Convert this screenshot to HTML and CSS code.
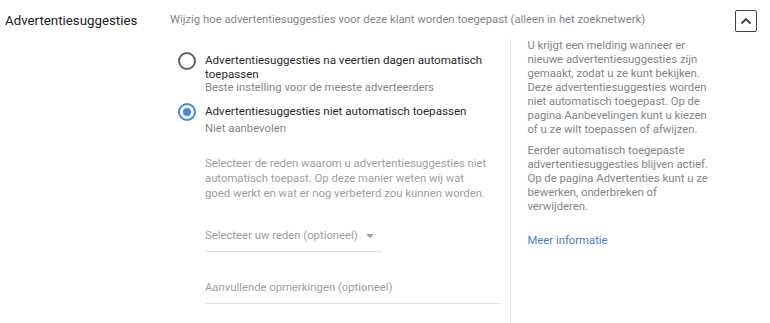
FILE: index.html
```html
<html>

<head>
    <meta charset="UTF-8">
    <title>Advertentiesuggesties</title>
    <link rel="stylesheet" href="styles.css">
</head>

<body>
    <div class="setting">
        <div class="setting_label">Advertentiesuggesties</div>
        <div class="setting_body">
            <div class="setting_desc">Wijzig hoe advertentiesuggesties voor deze klant worden toegepast (alleen in het zoeknetwerk)</div>
            <div class="setting_panel">
                <div class="options">
                    <div class="option">
                        <span class="radio"></span>
                        <div class="option_text">
                            <span class="option_title">Advertentiesuggesties na veertien dagen automatisch toepassen</span>
                            <span class="option_sub">Beste instelling voor de meeste adverteerders</span>
                        </div>
                    </div>
                    <div class="option">
                        <span class="radio checked"></span>
                        <div class="option_text">
                            <span class="option_title">Advertentiesuggesties niet automatisch toepassen</span>
                            <span class="option_sub spaced">Niet aanbevolen</span>
                        </div>
                    </div>
                    <div class="reason">
                        <p class="reason_text">Selecteer de reden waarom u advertentiesuggesties niet automatisch toepast. Op deze manier weten wij wat goed&nbsp;werkt en wat er nog verbeterd zou kunnen worden.</p>
                        <div class="field select_field">
                            <span>Selecteer uw reden (optioneel)</span>
                            <span class="arrow"></span>
                        </div>
                        <div class="field comment_field">
                            <span>Aanvullende opmerkingen (optioneel)</span>
                        </div>
                    </div>
                </div>
                <div class="help">
                    <p>U krijgt een melding wanneer er nieuwe advertentiesuggesties zijn gemaakt, zodat u ze kunt bekijken. Deze&nbsp;advertentiesuggesties worden niet automatisch toegepast. Op de pagina Aanbevelingen kunt u kiezen of u ze wilt toepassen of afwijzen.</p>
                    <p>Eerder automatisch toegepaste advertentiesuggesties blijven actief. Op de pagina Advertenties kunt u ze bewerken, onderbreken of verwijderen.</p>
                    <a class="help_link" href="#">Meer informatie</a>
                </div>
            </div>
        </div>
        <div class="setting_toggle">
            <button class="toggle_button" type="button">
                <svg width="12" height="8" viewBox="0 0 12 8"><path d="M1.5 6.5 L6 2 L10.5 6.5" fill="none" stroke="#3c4043" stroke-width="1.8"/></svg>
            </button>
        </div>
    </div>
</body>

</html>
```

FILE: styles.css
```css
body {
    margin: 0;
    font-family: Roboto, "Liberation Sans", sans-serif;
    background: #ffffff;
    color: #3c4043;
}

.setting {
    display: flex;
    padding-top: 12px;
    height: 311px;
    overflow: hidden;
}

.setting_label {
    width: 165px;
    padding-left: 5px;
    font-size: 13.3px;
    line-height: 18px;
    color: #202124;
}

.setting_body {
    width: 540px;
}

.setting_desc {
    font-size: 11.3px;
    line-height: 14px;
    color: #80868b;
    padding-top: 1px;
}

.setting_panel {
    display: flex;
    margin-top: 12px;
}

.options {
    width: 335px;
    padding-left: 8px;
    padding-top: 14px;
}

.option {
    display: flex;
    margin-bottom: 9px;
}

.radio {
    width: 14px;
    height: 14px;
    border: 2px solid #5f6368;
    border-radius: 50%;
    flex: none;
    margin-top: -1px;
    margin-right: 9px;
    position: relative;
}

.radio.checked {
    border-color: #4285f4;
}

.radio.checked::after {
    content: "";
    position: absolute;
    left: 3px;
    top: 3px;
    width: 8px;
    height: 8px;
    border-radius: 50%;
    background: #4285f4;
}

.option_text {
    font-size: 11.6px;
    line-height: 14px;
    width: 300px;
}

.option_title {
    display: block;
    color: #282a2d;
}

.option_sub {
    display: block;
    font-size: 11.3px;
    color: #80868b;
}

.option_sub.spaced {
    margin-top: 4px;
}

.reason {
    padding-left: 27px;
    padding-top: 11px;
}

.reason_text {
    margin: 0;
    width: 290px;
    font-size: 11.3px;
    line-height: 15px;
    color: #9aa0a6;
}

.field {
    font-size: 11.3px;
    line-height: 14px;
    color: #9aa0a6;
    border-bottom: 1px solid #e0e0e0;
    padding-bottom: 8px;
}

.select_field {
    margin-top: 28px;
    width: 177px;
    display: flex;
    align-items: center;
    justify-content: space-between;
}

.arrow {
    width: 0;
    height: 0;
    border-left: 4px solid transparent;
    border-right: 4px solid transparent;
    border-top: 4px solid #9aa0a6;
    margin-right: 8px;
}

.comment_field {
    margin-top: 29px;
    width: 295px;
}

.help {
    border-left: 1px solid #e8eaed;
    padding-left: 16px;
    width: 184px;
    height: 300px;
    font-size: 11.3px;
    line-height: 14px;
    color: #80868b;
}

.help p {
    margin: 0 0 7px 0;
}

.help_link {
    display: block;
    margin-top: 20px;
    color: #4a7bd0;
    text-decoration: none;
}

.setting_toggle {
    flex: 1;
    display: flex;
    justify-content: flex-end;
    padding-right: 13px;
}

.toggle_button {
    width: 22px;
    height: 22px;
    border: 1.5px solid #3c4043;
    border-radius: 2px;
    background: #ffffff;
    padding: 0;
    margin-top: -2px;
    display: flex;
    align-items: center;
    justify-content: center;
}
```
